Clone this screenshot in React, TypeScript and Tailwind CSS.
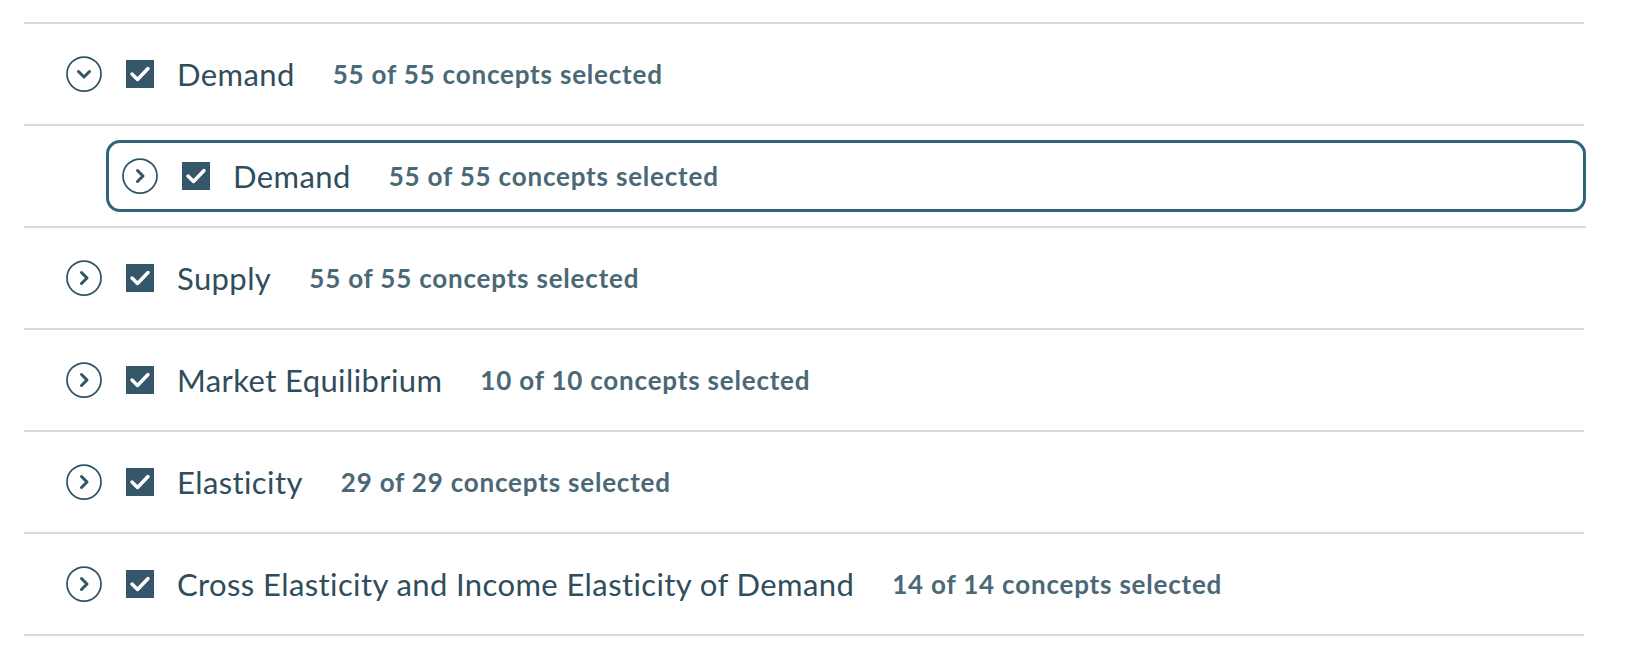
import React from 'react';

type Topic = {
  name: string;
  count: string;
  expanded?: boolean;
};

const topics: Topic[] = [
  { name: 'Supply', count: '55 of 55 concepts selected' },
  { name: 'Market Equilibrium', count: '10 of 10 concepts selected' },
  { name: 'Elasticity', count: '29 of 29 concepts selected' },
  {
    name: 'Cross Elasticity and Income Elasticity of Demand',
    count: '14 of 14 concepts selected',
  },
];

function Toggle({ open }: { open?: boolean }) {
  return (
    <svg width="36" height="36" viewBox="0 0 36 36" fill="none" className="shrink-0">
      <circle cx="18" cy="18" r="17" stroke="#2f5566" strokeWidth="1.75" />
      {open ? (
        <path d="M12.5 15.5 L18 21 L23.5 15.5" stroke="#2f5566" strokeWidth="3" strokeLinecap="round" strokeLinejoin="round" />
      ) : (
        <path d="M15.5 12.5 L21 18 L15.5 23.5" stroke="#2f5566" strokeWidth="3" strokeLinecap="round" strokeLinejoin="round" />
      )}
    </svg>
  );
}

function Check() {
  return (
    <div className="w-[28px] h-[28px] bg-[#34586a] flex items-center justify-center shrink-0">
      <svg width="28" height="28" viewBox="0 0 28 28" fill="none">
        <path d="M6 14 L11.5 19.5 L22 8.5" stroke="#ffffff" strokeWidth="3.5" strokeLinecap="round" strokeLinejoin="round" />
      </svg>
    </div>
  );
}

function RowContent({ topic }: { topic: Topic }) {
  return (
    <>
      <Toggle open={topic.expanded} />
      <div className="ml-[24px]">
        <Check />
      </div>
      <span className="ml-[23px] text-[31px] tracking-[0.4px] text-[#304d5c] leading-none">{topic.name}</span>
      <span className="ml-[38px] text-[26px] tracking-[0.8px] font-bold text-[#4a6875] leading-none">{topic.count}</span>
    </>
  );
}

export default function App() {
  return (
    <main className="min-h-screen bg-white pt-[22px] font-['Lato',sans-serif]">
      <div className="ml-[24px] w-[1560px] border-t-2 border-[#d6dbde]">
        {/* TOP LEVEL */}
        <div className="h-[102px] border-b-2 border-[#d6dbde] flex items-center pl-[42px]">
          <RowContent topic={{ name: 'Demand', count: '55 of 55 concepts selected', expanded: true }} />
        </div>

        {/* NESTED, FOCUSED */}
        <div className="h-[102px] border-b-2 border-[#d6dbde] flex items-center pl-[82px] mr-[-2px]">
          <div className="flex-1 h-[72px] border-[3px] border-[#2e6677] rounded-[14px] flex items-center pl-[13px]">
            <RowContent topic={{ name: 'Demand', count: '55 of 55 concepts selected' }} />
          </div>
        </div>

        {topics.map(t => (
          <div key={t.name} className="h-[102px] border-b-2 border-[#d6dbde] flex items-center pl-[42px]">
            <RowContent topic={t} />
          </div>
        ))}
      </div>
    </main>
  );
}
